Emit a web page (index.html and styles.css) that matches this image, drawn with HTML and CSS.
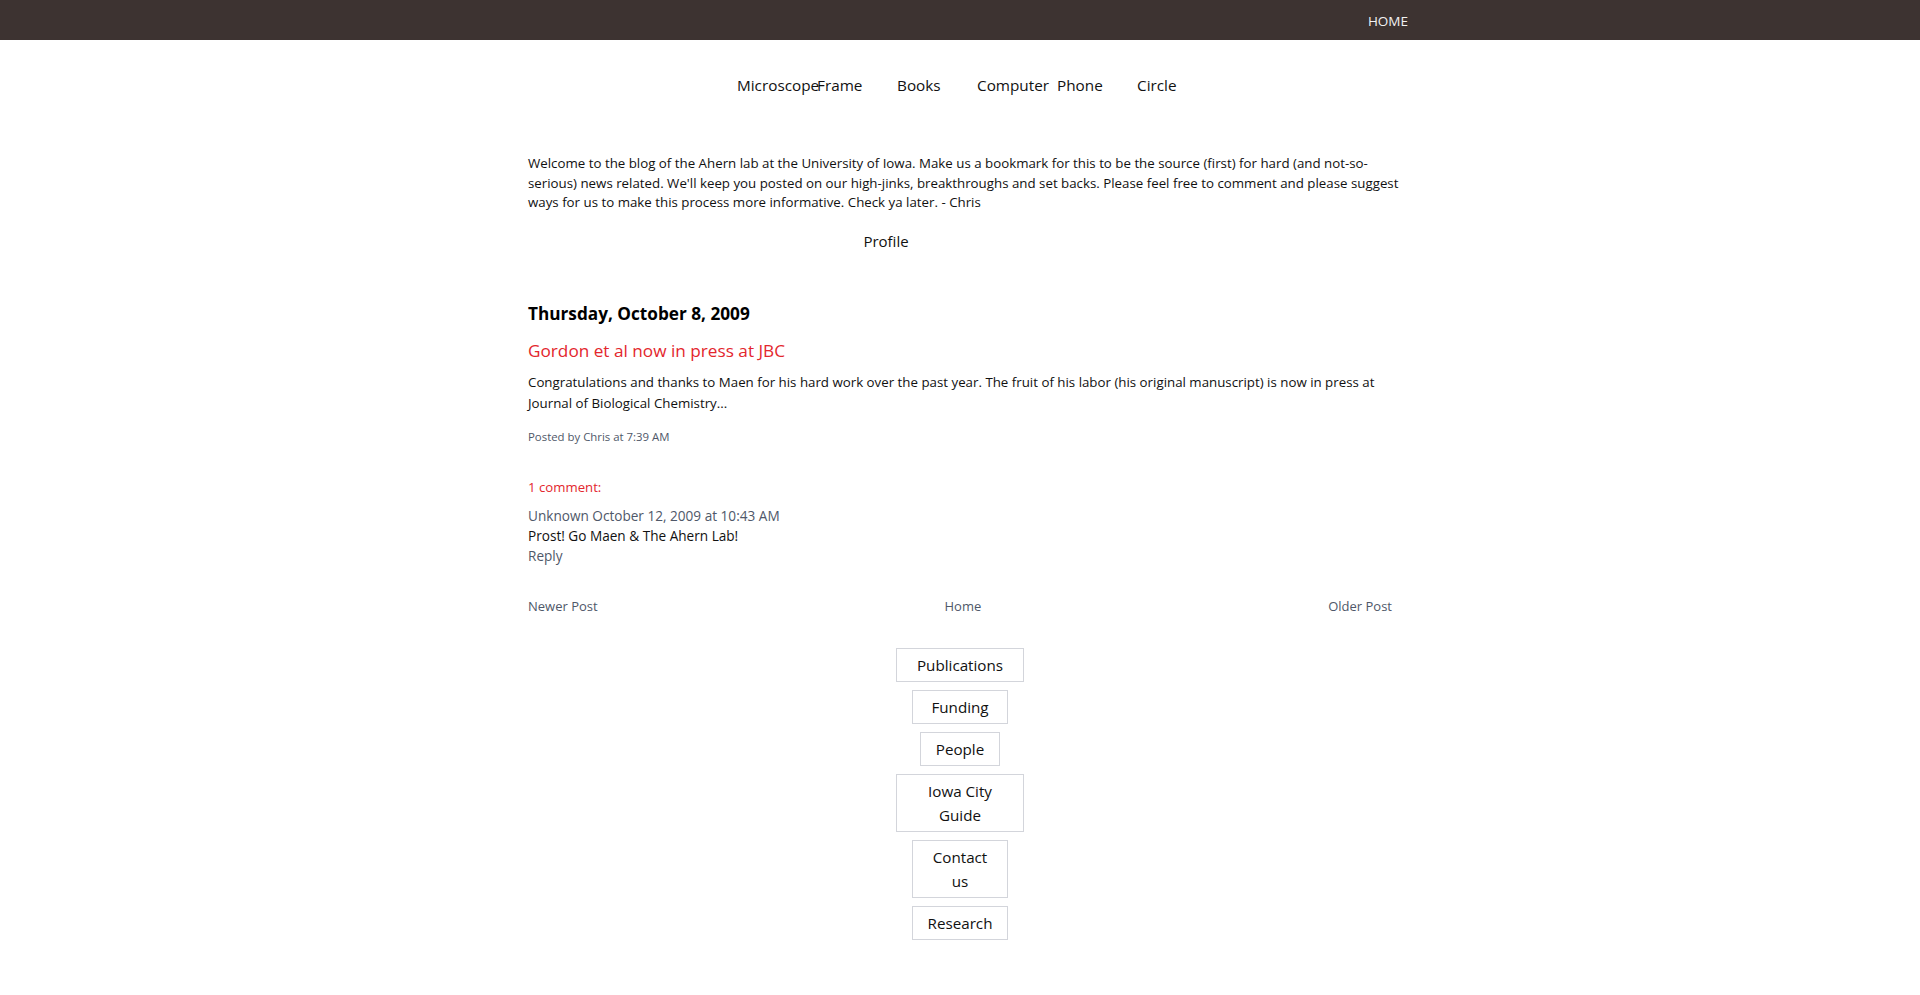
FILE: index.html
```html
<!DOCTYPE html>
<html lang="en">
<head>
<meta charset="utf-8">
<title>Ahern Lab Blog</title>
<link rel="stylesheet" href="styles.css">
</head>
<body>
<header class="topbar">
  <div class="topbar-inner">
    <a class="topbar-link" href="#">HOME</a>
  </div>
</header>

<nav class="cats">
  <div class="cats-inner">
    <a class="cat" href="#">Microscope</a>
    <a class="cat" href="#">Frame</a>
    <a class="cat" href="#">Books</a>
    <a class="cat" href="#">Computer</a>
    <a class="cat" href="#">Phone</a>
    <a class="cat" href="#">Circle</a>
  </div>
</nav>

<main class="content">
  <p class="intro">Welcome to the blog of the Ahern lab at the University of Iowa. Make us a bookmark for this to be the source (first) for hard (and not-so-serious) news related. We'll keep you posted on our high-jinks, breakthroughs and set backs. Please feel free to comment and please suggest ways for us to make this process more informative. Check ya later. - Chris</p>
  <div class="profile"><a href="#">Profile</a></div>

  <h2 class="date">Thursday, October 8, 2009</h2>
  <h3 class="post-title">Gordon et al now in press at JBC</h3>
  <p class="post-body">Congratulations and thanks to Maen for his hard work over the past year. The fruit of his labor (his original manuscript) is now in press at Journal of Biological Chemistry...</p>
  <div class="post-meta">Posted by Chris at 7:39 AM</div>

  <h4 class="comments-head">1 comment:</h4>
  <div class="comment">
    <div class="comment-author">Unknown October 12, 2009 at 10:43 AM</div>
    <div class="comment-body">Prost! Go Maen &amp; The Ahern Lab!</div>
    <div class="comment-reply">Reply</div>
  </div>

  <div class="pager">
    <a class="pager-link" href="#">Newer Post</a>
    <a class="pager-link" href="#">Home</a>
    <a class="pager-link" href="#">Older Post</a>
  </div>
</main>

<nav class="side-links">
  <a class="box w128" href="#">Publications</a>
  <a class="box w96" href="#">Funding</a>
  <a class="box w80" href="#">People</a>
  <a class="box w128" href="#">Iowa City Guide</a>
  <a class="box w96" href="#">Contact us</a>
  <a class="box w96" href="#">Research</a>
</nav>
</body>
</html>
```

FILE: styles.css
```css
* { box-sizing: border-box; }

html, body {
  margin: 0;
  padding: 0;
  background: #ffffff;
}

body {
  font-family: "Open Sans", "Noto Sans", sans-serif;
  color: #111111;
  font-size: 13.3px;
}

a { text-decoration: none; color: inherit; }

.topbar {
  background: #3d3331;
  height: 40px;
}

.topbar-inner {
  width: 896px;
  margin: 0 auto;
  display: flex;
  justify-content: flex-end;
  height: 40px;
  align-items: center;
  padding-top: 2px;
}

.topbar-link {
  color: #f2f2f2;
  font-size: 13.5px;
  line-height: 20px;
}

.cats {
  margin-top: 35px;
  display: flex;
  justify-content: center;
}

.cats-inner {
  display: grid;
  grid-template-columns: repeat(6, 80px);
  width: 480px;
  margin-left: 34px;
}

.cat {
  font-size: 15.3px;
  line-height: 20px;
  white-space: nowrap;
  color: #111;
}

.content {
  width: 864px;
  margin: 0 auto;
}

.intro {
  width: 880px;
  margin: 59px 0 0;
  line-height: 19.7px;
  font-size: 13.3px;
}

.profile {
  width: 716px;
  text-align: center;
  margin-top: 17px;
  font-size: 15px;
  line-height: 22px;
}

.date {
  margin: 50px 0 0;
  font-size: 17.2px;
  font-weight: 700;
  line-height: 24px;
  color: #000;
}

.post-title {
  margin: 13px 0 0;
  font-size: 17.2px;
  font-weight: 400;
  line-height: 24px;
  color: #e3262d;
}

.post-body {
  margin: 9px 0 0;
  line-height: 21px;
  font-size: 13.3px;
}

.post-meta {
  margin-top: 14px;
  font-size: 11.4px;
  line-height: 18px;
  color: #4f5869;
}

.comments-head {
  margin: 31px 0 0;
  font-size: 13.2px;
  font-weight: 400;
  line-height: 20px;
  color: #e3262d;
}

.comment {
  margin-top: 9px;
  line-height: 20px;
  font-size: 13.6px;
}

.comment-author, .comment-reply {
  color: #4f5869;
}

.pager {
  margin-top: 30px;
  display: flex;
  justify-content: space-between;
  line-height: 20px;
  font-size: 13px;
}

.pager-link { color: #4f5869; }

.side-links {
  margin: 32px auto 40px;
  display: flex;
  flex-direction: column;
  align-items: center;
  gap: 8px;
}

.box {
  display: block;
  border: 1px solid #d3d5db;
  padding: 4px 12px;
  text-align: center;
  font-size: 15.2px;
  line-height: 24px;
  color: #111;
}

.w128 { width: 128px; }
.w96 { width: 96px; }
.w80 { width: 80px; }
```
